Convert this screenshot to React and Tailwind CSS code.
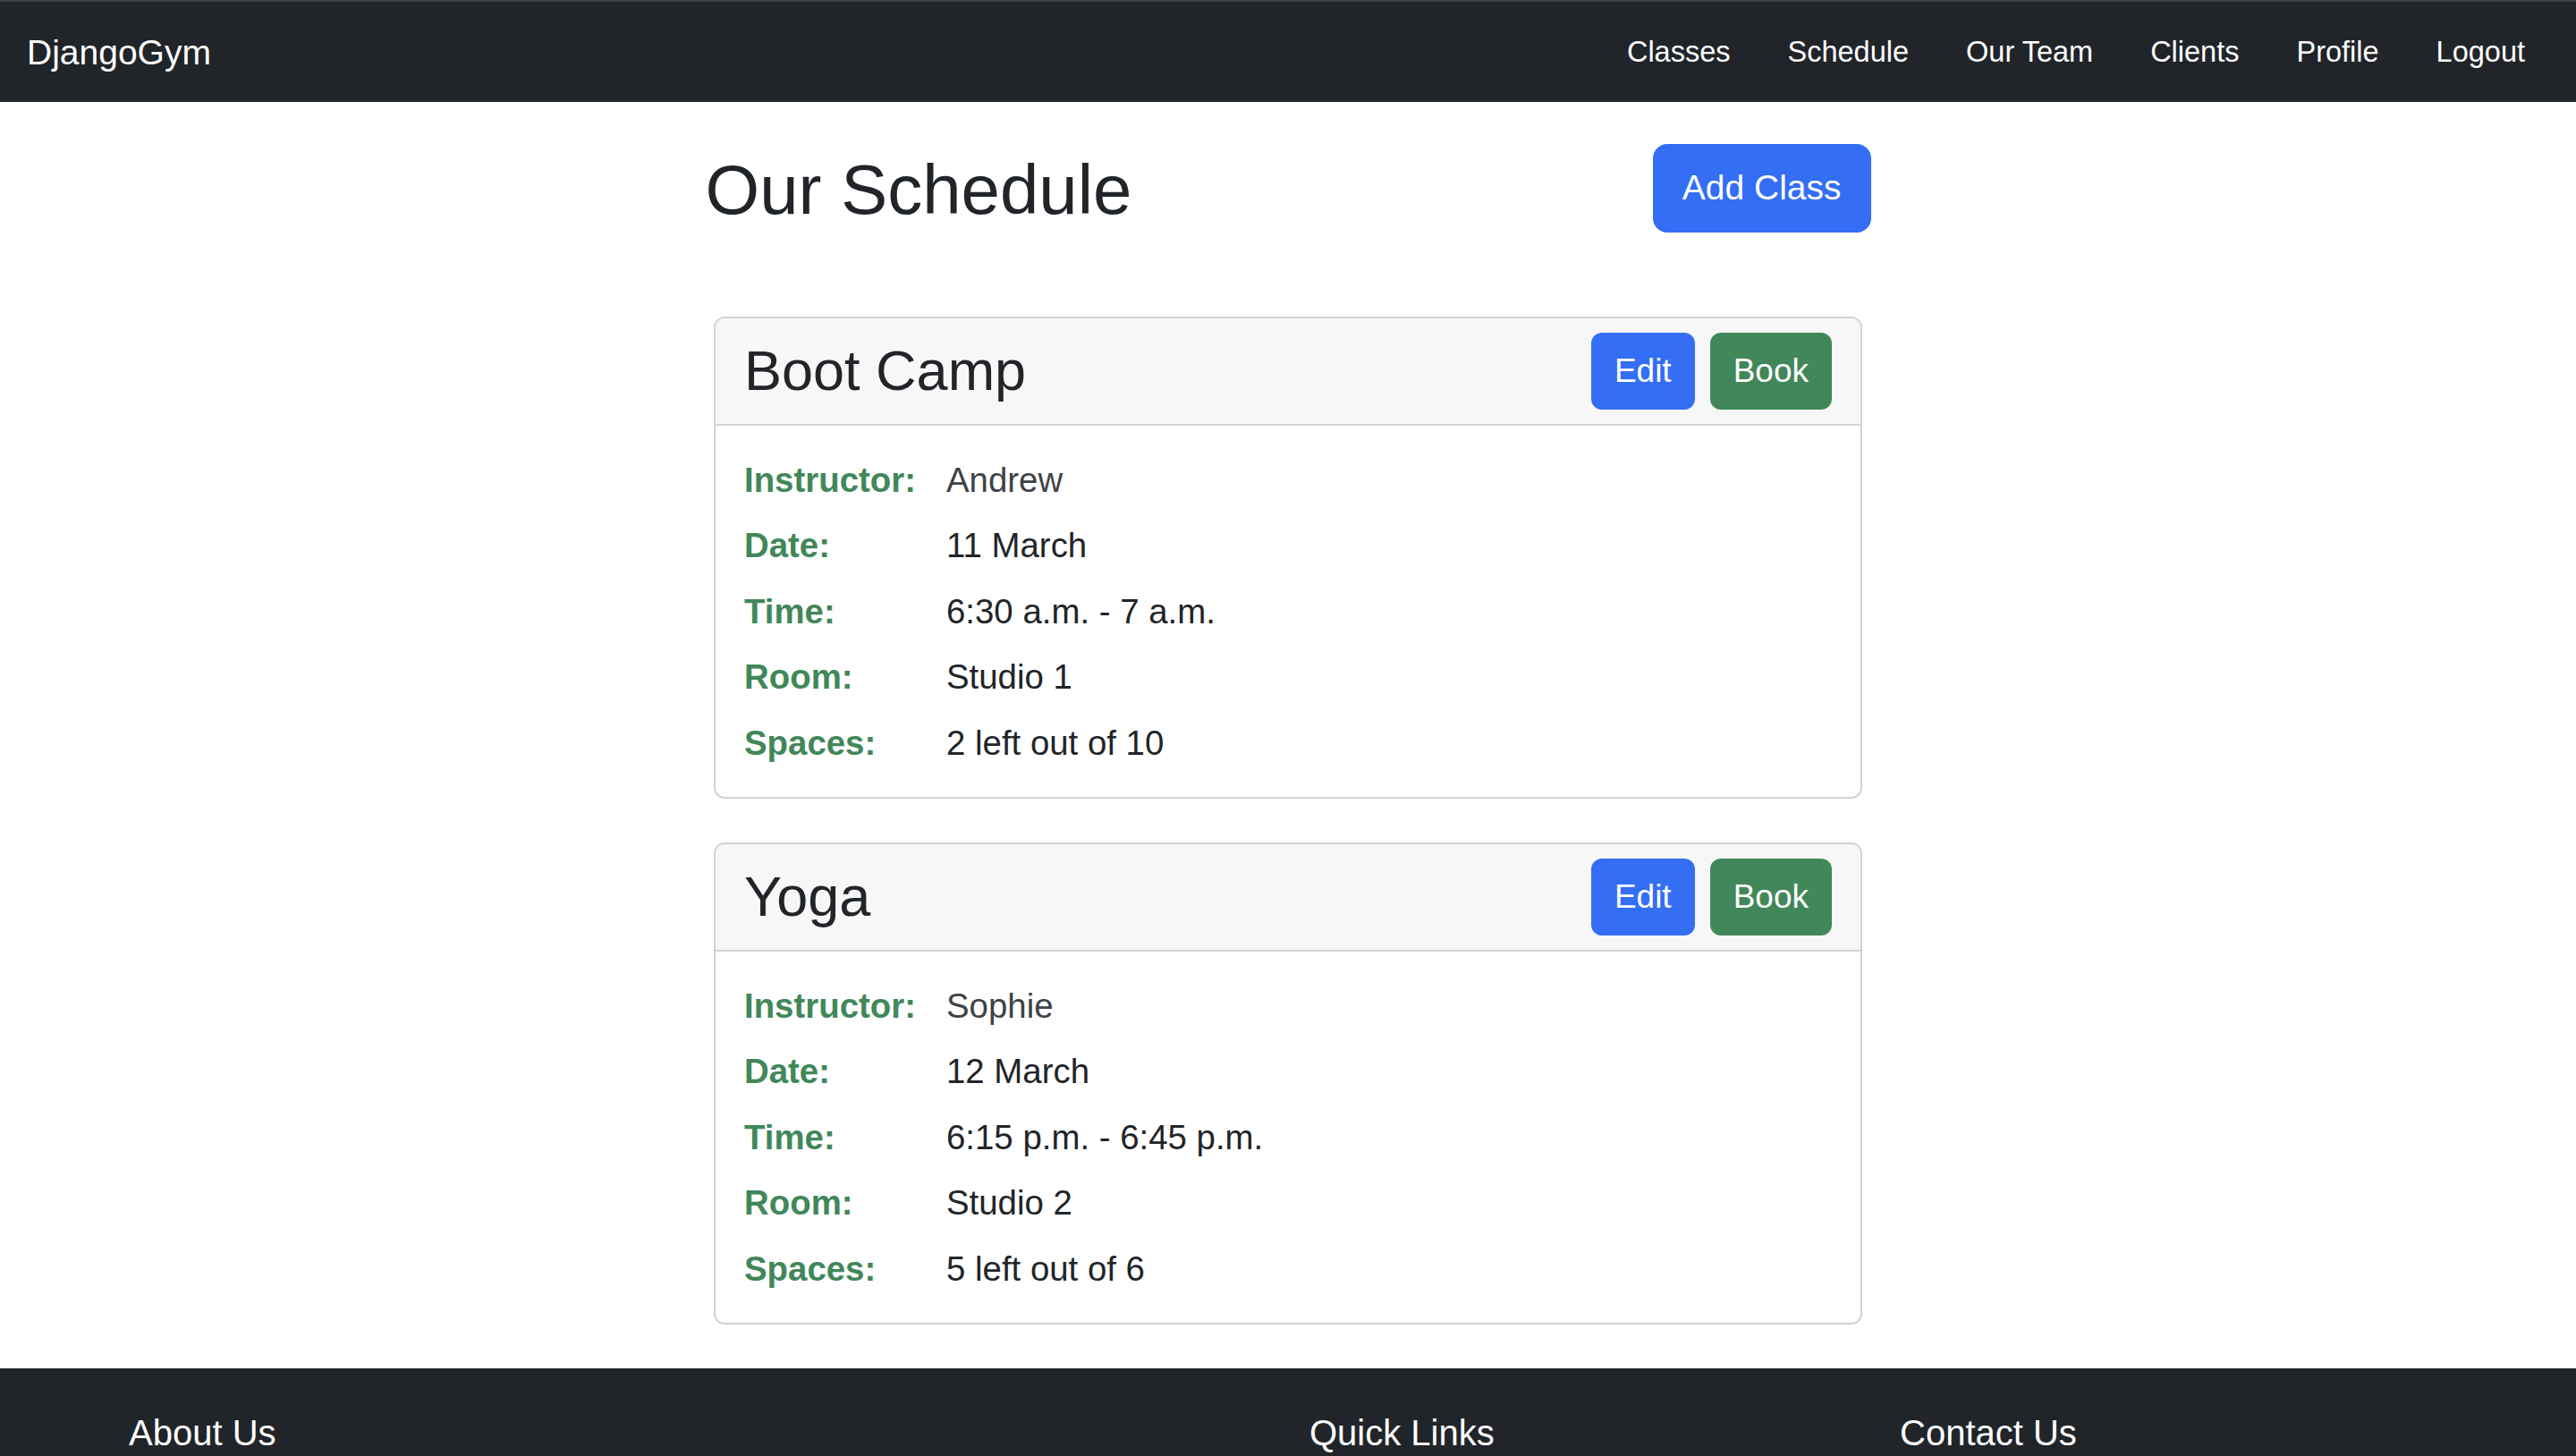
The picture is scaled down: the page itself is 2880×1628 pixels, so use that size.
const classes = [
  {
    id: 1,
    name: 'Boot Camp',
    instructor: 'Andrew',
    date: '11 March',
    time: '6:30 a.m. - 7 a.m.',
    room: 'Studio 1',
    spaces: '2 left out of 10',
  },
  {
    id: 2,
    name: 'Yoga',
    instructor: 'Sophie',
    date: '12 March',
    time: '6:15 p.m. - 6:45 p.m.',
    room: 'Studio 2',
    spaces: '5 left out of 6',
  },
];

const navLinks = ['Classes', 'Schedule', 'Our Team', 'Clients', 'Profile', 'Logout'];

function Navbar() {
  return (
    <nav className="bg-[#212529] border-t-2 border-[#3c3e41] h-[114px] flex items-center justify-between pl-[30px] pr-[25px]">
      <a href="#" className="text-white text-[39px] leading-none">
        DjangoGym
      </a>
      <ul className="flex items-center">
        {navLinks.map((link) => (
          <li key={link}>
            <a href="#" className="block px-[32px] text-white text-[32.5px] leading-[48px]">
              {link}
            </a>
          </li>
        ))}
      </ul>
    </nav>
  );
}

function ClassCard({ item }) {
  const rows = [
    ['Instructor:', item.instructor, 'text-[#3f4246]'],
    ['Date:', item.date, 'text-[#212529]'],
    ['Time:', item.time, 'text-[#212529]'],
    ['Room:', item.room, 'text-[#212529]'],
    ['Spaces:', item.spaces, 'text-[#212529]'],
  ];

  return (
    <div className="w-[1284px] mx-auto border-2 border-[#d3d3d3] rounded-[12px] overflow-hidden mb-[49px]">
      {/* Card header */}
      <div className="flex items-center justify-between bg-[#f7f7f7] border-b-2 border-[#d3d3d3] px-[32px] py-[16px]">
        <h2 className="text-[63px] leading-[1.2] font-medium text-[#212529]">{item.name}</h2>
        <div className="flex items-center gap-[17px]">
          <button className="h-[86px] px-[26px] rounded-[12px] bg-[#336ef5] text-white text-[37px]">
            Edit
          </button>
          <button className="h-[86px] px-[26px] rounded-[12px] bg-[#41875a] text-white text-[37px]">
            Book
          </button>
        </div>
      </div>

      {/* Card body */}
      <div className="grid grid-cols-[226px_1fr] gap-y-[16px] p-[32px] text-[38.4px] leading-[57.4px]">
        {rows.map(([label, value, color]) => (
          <div key={label} className="contents">
            <span className="font-bold text-[#41875a]">{label}</span>
            <span className={color}>{value}</span>
          </div>
        ))}
      </div>
    </div>
  );
}

function Footer() {
  return (
    <footer className="bg-[#212529] text-white pt-[48px] pb-[96px]">
      <div className="w-[2640px] mx-auto grid grid-cols-12">
        <div className="col-span-6 px-[24px]">
          <h5 className="text-[40px] leading-[48px] font-medium mb-[16px]">About Us</h5>
          <p className="text-[32px] leading-[48px] text-[#adb5bd]">
            DjangoGym is your local fitness centre.
          </p>
        </div>
        <div className="col-span-3 px-[24px]">
          <h5 className="text-[40px] leading-[48px] font-medium mb-[16px]">Quick Links</h5>
          <p className="text-[32px] leading-[48px] text-[#adb5bd]">Classes</p>
        </div>
        <div className="col-span-3 px-[24px]">
          <h5 className="text-[40px] leading-[48px] font-medium mb-[16px]">Contact Us</h5>
          <p className="text-[32px] leading-[48px] text-[#adb5bd]">info@djangogym.com</p>
        </div>
      </div>
    </footer>
  );
}

export default function App() {
  return (
    <div className="min-h-screen bg-white font-['Liberation_Sans',Arial,sans-serif]">
      <Navbar />

      <main>
        {/* Page header */}
        <div className="w-[1303px] mx-auto flex items-center justify-between mt-[46px] mb-[94px]">
          <h1 className="text-[78px] leading-[96px] pt-[4px] font-medium text-[#212529]">Our Schedule</h1>
          <button className="h-[99px] px-[33px] rounded-[16px] bg-[#336ef5] text-white text-[39px]">
            Add Class
          </button>
        </div>

        {classes.map((item) => (
          <ClassCard key={item.id} item={item} />
        ))}
      </main>

      <Footer />
    </div>
  );
}
